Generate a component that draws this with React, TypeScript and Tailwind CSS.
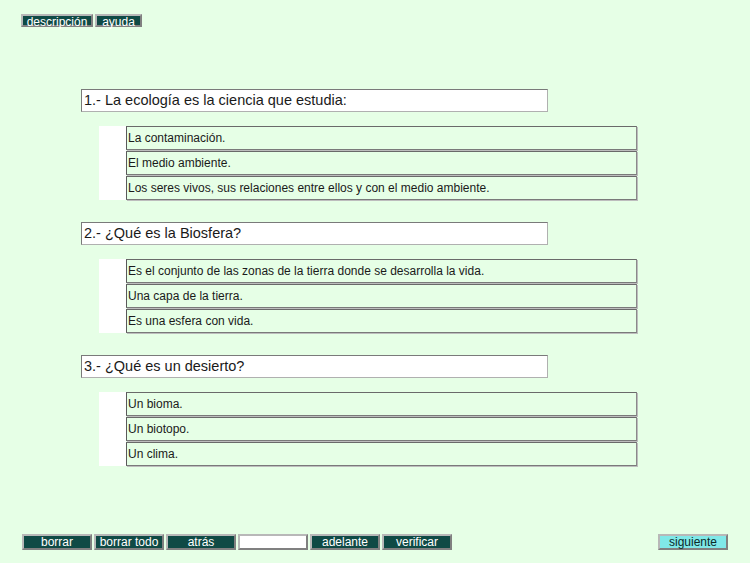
const questions = [
  {
    q: "1.- La ecología es la ciencia que estudia:",
    a: [
      "La contaminación.",
      "El medio ambiente.",
      "Los seres vivos, sus relaciones entre ellos y con el medio ambiente.",
    ],
  },
  {
    q: "2.- ¿Qué es la Biosfera?",
    a: [
      "Es el conjunto de las zonas de la tierra donde se desarrolla la vida.",
      "Una capa de la tierra.",
      "Es una esfera con vida.",
    ],
  },
  {
    q: "3.- ¿Qué es un desierto?",
    a: ["Un bioma.", "Un biotopo.", "Un clima."],
  },
];

const Btn = ({ label, w, h }: { label: string; w: string; h: string }) => (
  <div
    className={`${w} ${h} bg-[#0f4a45] text-white text-[12px] leading-[12px] text-center border-2 border-t-[#b8b8b8] border-l-[#b8b8b8] border-r-[#808080] border-b-[#808080]`}
  >
    {label}
  </div>
);

export default function App() {
  return (
    <div
      className="w-[750px] h-[563px] bg-[#e6ffe6] flex flex-col"
      style={{ fontFamily: '"Liberation Sans", Arial, sans-serif' }}
    >
      <div className="flex gap-[2px] pt-[14px] pl-[21px]">
        <Btn label="descripción" w="w-[72px]" h="h-[13px]" />
        <Btn label="ayuda" w="w-[47px]" h="h-[13px]" />
      </div>

      <main className="mt-[62px] flex flex-col gap-[22px]">
        {questions.map((item, index) => (
          <section key={index} className="flex flex-col">
            <div className="ml-[81px] w-[467px] h-[23px] bg-white border border-t-[#7a7a7a] border-l-[#7a7a7a] border-r-[#b0b0b0] border-b-[#b0b0b0] text-[14.5px] leading-[21px] pl-[2px] text-[#1a1a1a]">
              {item.q}
            </div>
            <div className="ml-[99px] mt-[14px] flex">
              <div className="w-[27px] bg-white"></div>
              <div className="w-[511px] flex flex-col gap-[1px]">
                {item.a.map((ans, i) => (
                  <div
                    key={i}
                    className="h-[24px] border border-t-[#6a6a6a] border-l-[#5a5a5a] border-r-[#8a8a8a] border-b-[#7a7a7a] shadow-[1px_1px_0_#bdbdbd] text-[12px] leading-[22px] pl-[1px] text-[#1a1a1a]"
                  >
                    {ans}
                  </div>
                ))}
              </div>
            </div>
          </section>
        ))}
      </main>

      <div className="mt-auto mb-[13px] flex items-center pl-[22px] pr-[22px]">
        <div className="flex gap-[2px]">
          <Btn label="borrar" w="w-[70px]" h="h-[16px]" />
          <Btn label="borrar todo" w="w-[70px]" h="h-[16px]" />
          <Btn label="atrás" w="w-[70px]" h="h-[16px]" />
          <div className="w-[70px] h-[16px] bg-white border-2 border-t-[#b8b8b8] border-l-[#b8b8b8] border-r-[#808080] border-b-[#808080]"></div>
          <Btn label="adelante" w="w-[70px]" h="h-[16px]" />
          <Btn label="verificar" w="w-[70px]" h="h-[16px]" />
        </div>
        <div className="ml-auto w-[70px] h-[16px] bg-[#80e8e8] text-[#0a2a2a] text-[12px] leading-[12px] text-center border-2 border-t-[#b8b8b8] border-l-[#b8b8b8] border-r-[#808080] border-b-[#808080]">
          siguiente
        </div>
      </div>
    </div>
  );
}
